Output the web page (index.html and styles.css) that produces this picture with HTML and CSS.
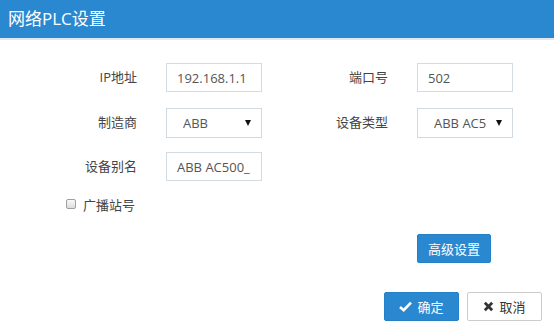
FILE: index.html
```html
<!DOCTYPE html>
<html lang="zh">
<head>
<meta charset="utf-8">
<link rel="stylesheet" href="styles.css">
</head>
<body>
<div class="dialog">
  <div class="header">网络PLC设置</div>
  <div class="body">
    <div class="form">
      <label class="lbl">IP地址</label>
      <div class="field"><span class="val">192.168.1.1</span></div>
      <label class="lbl">端口号</label>
      <div class="field"><span class="val">502</span></div>

      <label class="lbl">制造商</label>
      <div class="field select"><span class="sval">ABB</span><span class="caret"></span></div>
      <label class="lbl">设备类型</label>
      <div class="field select"><span class="sval">ABB AC500</span><span class="caret"></span></div>

      <label class="lbl">设备别名</label>
      <div class="field"><span class="val">ABB AC500_</span></div>
    </div>
    <div class="check-row">
      <span class="checkbox"></span><span class="check-label">广播站号</span>
    </div>
    <div class="adv-row">
      <button class="btn btn-primary adv">高级设置</button>
    </div>
    <div class="footer">
      <button class="btn btn-primary act">
        <svg class="ico" viewBox="0 0 14 12" width="13" height="11"><path d="M1 6.5 L5 10 L13 1.8" fill="none" stroke="#fff" stroke-width="2.8" stroke-linejoin="miter"/></svg>确定
      </button>
      <button class="btn btn-default act">
        <svg class="ico" viewBox="0 0 12 12" width="11" height="11"><path d="M2 2 L10 10 M10 2 L2 10" fill="none" stroke="#333" stroke-width="3"/></svg>取消
      </button>
    </div>
  </div>
</div>
</body>
</html>
```
FILE: styles.css
```css
html, body {
  margin: 0;
  padding: 0;
  background: #fff;
}
body {
  font-family: "Open Sans", "Noto Sans CJK SC", sans-serif;
  font-size: 13px;
  color: #555;
}
.dialog {
  width: 554px;
  height: 334px;
  overflow: hidden;
}
.header {
  box-sizing: border-box;
  background: #2a88d0;
  border-bottom: 2px solid #e3e6ea;
  height: 40px;
  color: #fff;
  font-size: 17px;
  line-height: 37px;
  padding-left: 8px;
}
.body {
  padding-top: 23px;
}
.form {
  display: grid;
  grid-template-columns: 108px 96px 97px 96px;
  grid-auto-rows: 30px;
  column-gap: 29px;
  row-gap: 14.5px;
  margin-left: 29px;
}
.lbl {
  text-align: right;
  line-height: 29px;
  color: #444;
}
.field {
  box-sizing: border-box;
  height: 29px;
  border: 1px solid #d3dbe3;
  display: flex;
  align-items: center;
  padding-left: 10px;
  color: #555;
}
.field.select {
  padding-left: 16px;
  height: 30px;
  border-color: #d0d8e0;
}
.sval {
  width: 52px;
  overflow: hidden;
  white-space: nowrap;
}
.caret {
  margin-left: auto;
  margin-right: 10px;
  width: 0;
  height: 0;
  border-left: 3px solid transparent;
  border-right: 3px solid transparent;
  border-top: 6px solid #111;
}
.check-row {
  display: flex;
  align-items: center;
  margin-top: 13px;
  margin-left: 66px;
  height: 18px;
}
.checkbox {
  box-sizing: border-box;
  width: 10px;
  height: 10px;
  border: 1px solid #9aa0a6;
  border-radius: 2px;
  background: linear-gradient(#fafafa, #dcdcdc);
  margin-right: 7px;
}
.check-label {
  color: #444;
}
.adv-row {
  margin-top: 21px;
  margin-left: 417px;
}
.btn {
  box-sizing: border-box;
  font-family: "Open Sans", "Noto Sans CJK SC", sans-serif;
  font-size: 13px;
  border-radius: 2px;
  display: inline-flex;
  align-items: center;
  justify-content: center;
  padding: 0;
  cursor: pointer;
}
.btn-primary {
  background: #2a88d0;
  border: 1px solid #2580c6;
  color: #fff;
}
.btn-default {
  background: #fff;
  border: 1px solid #ccc;
  color: #333;
}
.adv {
  width: 74px;
  height: 29px;
}
.footer {
  display: flex;
  justify-content: flex-end;
  gap: 8px;
  margin-top: 29px;
  padding-right: 12px;
}
.act {
  width: 75px;
  height: 29px;
}
.ico {
  margin-right: 5px;
}
```
